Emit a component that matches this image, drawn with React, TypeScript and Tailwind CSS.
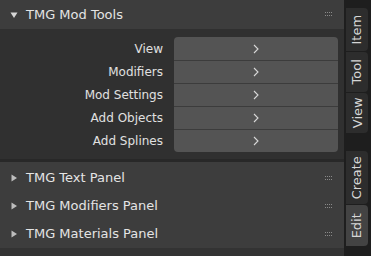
import React from 'react';

const rows = ['View', 'Modifiers', 'Mod Settings', 'Add Objects', 'Add Splines'];
const collapsed = ['TMG Text Panel', 'TMG Modifiers Panel', 'TMG Materials Panel'];
const tabs = [
  { label: 'Item', h: 'h-[43px]', active: false },
  { label: 'Tool', h: 'h-[40px]', active: false },
  { label: 'View', h: 'h-[40px]', active: false },
  { label: 'Create', h: 'h-[53px]', active: false, gap: true },
  { label: 'Edit', h: 'h-[41px]', active: true },
];

function Grip() {
  return (
    <svg width="9" height="5" viewBox="0 0 9 5" className="shrink-0">
      {[0, 2, 4, 6, 8].slice(0, 4).map((x) =>
        [0, 3].map((y) => <rect key={`${x}-${y}`} x={x} y={y} width="1" height="1" fill="#8a8a8a" />)
      )}
    </svg>
  );
}

function Arrow({ open }: { open: boolean }) {
  return (
    <svg width="8" height="8" viewBox="0 0 8 8" className="shrink-0">
      {open ? <path d="M0.5 1.5 L7.5 1.5 L4 7 Z" fill="#d6d6d6" /> : <path d="M1.5 0.5 L7 4 L1.5 7.5 Z" fill="#bdbdbd" />}
    </svg>
  );
}

export default function App() {
  return (
    <div
      className="flex h-[256px] w-[371px] overflow-hidden bg-[#262626] text-[#dcdcdc]"
      style={{ fontFamily: '"DejaVu Sans", sans-serif' }}
    >
      {/* Panels */}
      <div className="flex w-[344px] flex-col">
        <div className="flex h-[29px] items-center bg-[#3d3d3d] pl-[10px] pr-[10px]">
          <Arrow open />
          <span className="ml-[8px] text-[13px] text-[#e4e4e4]">TMG Mod Tools</span>
          <div className="ml-auto"><Grip /></div>
        </div>
        <div className="flex flex-col bg-[#303030] pb-[7px] pt-[8px]">
          {rows.map((r, i) => (
            <div key={r} className="flex h-[23px] items-center">
              <span className="w-[164px] pr-[1px] text-right text-[12px] text-[#e0e0e0]">{r}</span>
              <div
                className={`ml-[10px] flex h-full w-[164px] items-center justify-center bg-[#545454] ${
                  i === 0 ? 'rounded-t-[4px]' : 'border-t border-[#3c3c3c]'
                } ${i === rows.length - 1 ? 'rounded-b-[4px]' : ''}`}
              >
                <svg width="6" height="10" viewBox="0 0 6 10">
                  <path d="M1 1 L5 5 L1 9" fill="none" stroke="#d8d8d8" strokeWidth="1.1" />
                </svg>
              </div>
            </div>
          ))}
        </div>
        <div className="h-[3px] bg-[#282828]" />
        <div className="flex flex-1 flex-col bg-[#3d3d3d] pt-[2px]">
          {collapsed.map((c) => (
            <div key={c} className="flex h-[28px] items-center pl-[10px] pr-[10px]">
              <Arrow open={false} />
              <span className="ml-[8px] text-[13px] text-[#e4e4e4]">{c}</span>
              <div className="ml-auto"><Grip /></div>
            </div>
          ))}
        </div>
        <div className="h-[8px] bg-[#333333]" />
      </div>

      {/* Tabs */}
      <div className="flex w-[27px] flex-col bg-[#1e1e1e] pt-[7px]">
        {tabs.map((t) => (
          <div
            key={t.label}
            className={`${t.h} ${t.gap ? 'mt-[18px]' : 'mt-[1px]'} ml-[2px] mr-[3px] flex items-center justify-center rounded-r-[4px] ${
              t.active ? 'bg-[#434343]' : 'bg-[#2d2d2d]'
            }`}
          >
            <span className="-rotate-90 whitespace-nowrap text-[13px] text-[#d6d6d6]">{t.label}</span>
          </div>
        ))}
      </div>
    </div>
  );
}
